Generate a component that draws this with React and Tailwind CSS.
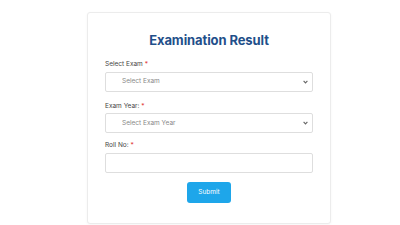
import { useState } from 'react';

const Chevron = () => (
    <span className="absolute right-[5px] top-1/2 -translate-y-1/2 text-[#666] pointer-events-none">
        <svg width="5" height="4" viewBox="0 0 5 4" className="block">
            <path d="M0.6 0.8 L2.5 2.9 L4.4 0.8" fill="none" stroke="currentColor" strokeWidth="1.1" />
        </svg>
    </span>
);

const App = () => {
    const [roll, setRoll] = useState('');

    return (
        <div className="min-h-[225px] w-[400px] bg-white pt-3" style={{ fontFamily: 'Inter, "Noto Sans", sans-serif' }}>
            {/* Card */}
            <div className="ml-[87px] w-[244px] h-[212px] bg-white border border-[#ececec] rounded-[3px] shadow-[0_1px_3px_rgba(0,0,0,0.04)] px-[17px] pt-[21px]">
                <h1 className="text-center text-[13px] font-bold text-[#1f4f8a] leading-none tracking-[-0.1px]">
                    Examination Result
                </h1>

                <div className="mt-[14px] leading-none">
                    <label className="block text-[6.5px] text-[#444] leading-none">
                        Select Exam <span className="text-[#e23b3b]">*</span>
                    </label>
                    <div className="relative mt-[4px]">
                        <select className="block w-full h-[20px] appearance-none border border-[#dedede] rounded-[2px] bg-white pl-[16px] text-[6.5px] text-[#888] outline-none">
                            <option>Select Exam</option>
                        </select>
                        <Chevron />
                    </div>
                </div>

                <div className="mt-[11px] leading-none">
                    <label className="block text-[6.5px] text-[#444] leading-none">
                        Exam Year: <span className="text-[#e23b3b]">*</span>
                    </label>
                    <div className="relative mt-[4px]">
                        <select className="block w-full h-[20px] appearance-none border border-[#dedede] rounded-[2px] bg-white pl-[16px] text-[6.5px] text-[#888] outline-none">
                            <option>Select Exam Year</option>
                        </select>
                        <Chevron />
                    </div>
                </div>

                <div className="mt-[9px] leading-none">
                    <label className="block text-[6.5px] text-[#444] leading-none">
                        Roll No: <span className="text-[#e23b3b]">*</span>
                    </label>
                    <input
                        type="text"
                        value={roll}
                        onChange={(e) => setRoll(e.target.value)}
                        className="block mt-[4px] w-full h-[20px] border border-[#dedede] rounded-[2px] bg-white px-2 text-[6.5px] outline-none"
                    />
                </div>

                <div className="flex justify-center mt-[9px]">
                    <button className="w-[44px] h-[21px] rounded-[3px] bg-[#1ea6ea] text-white text-[6.5px] leading-none">
                        Submit
                    </button>
                </div>
            </div>
        </div>
    );
};

export default App;
